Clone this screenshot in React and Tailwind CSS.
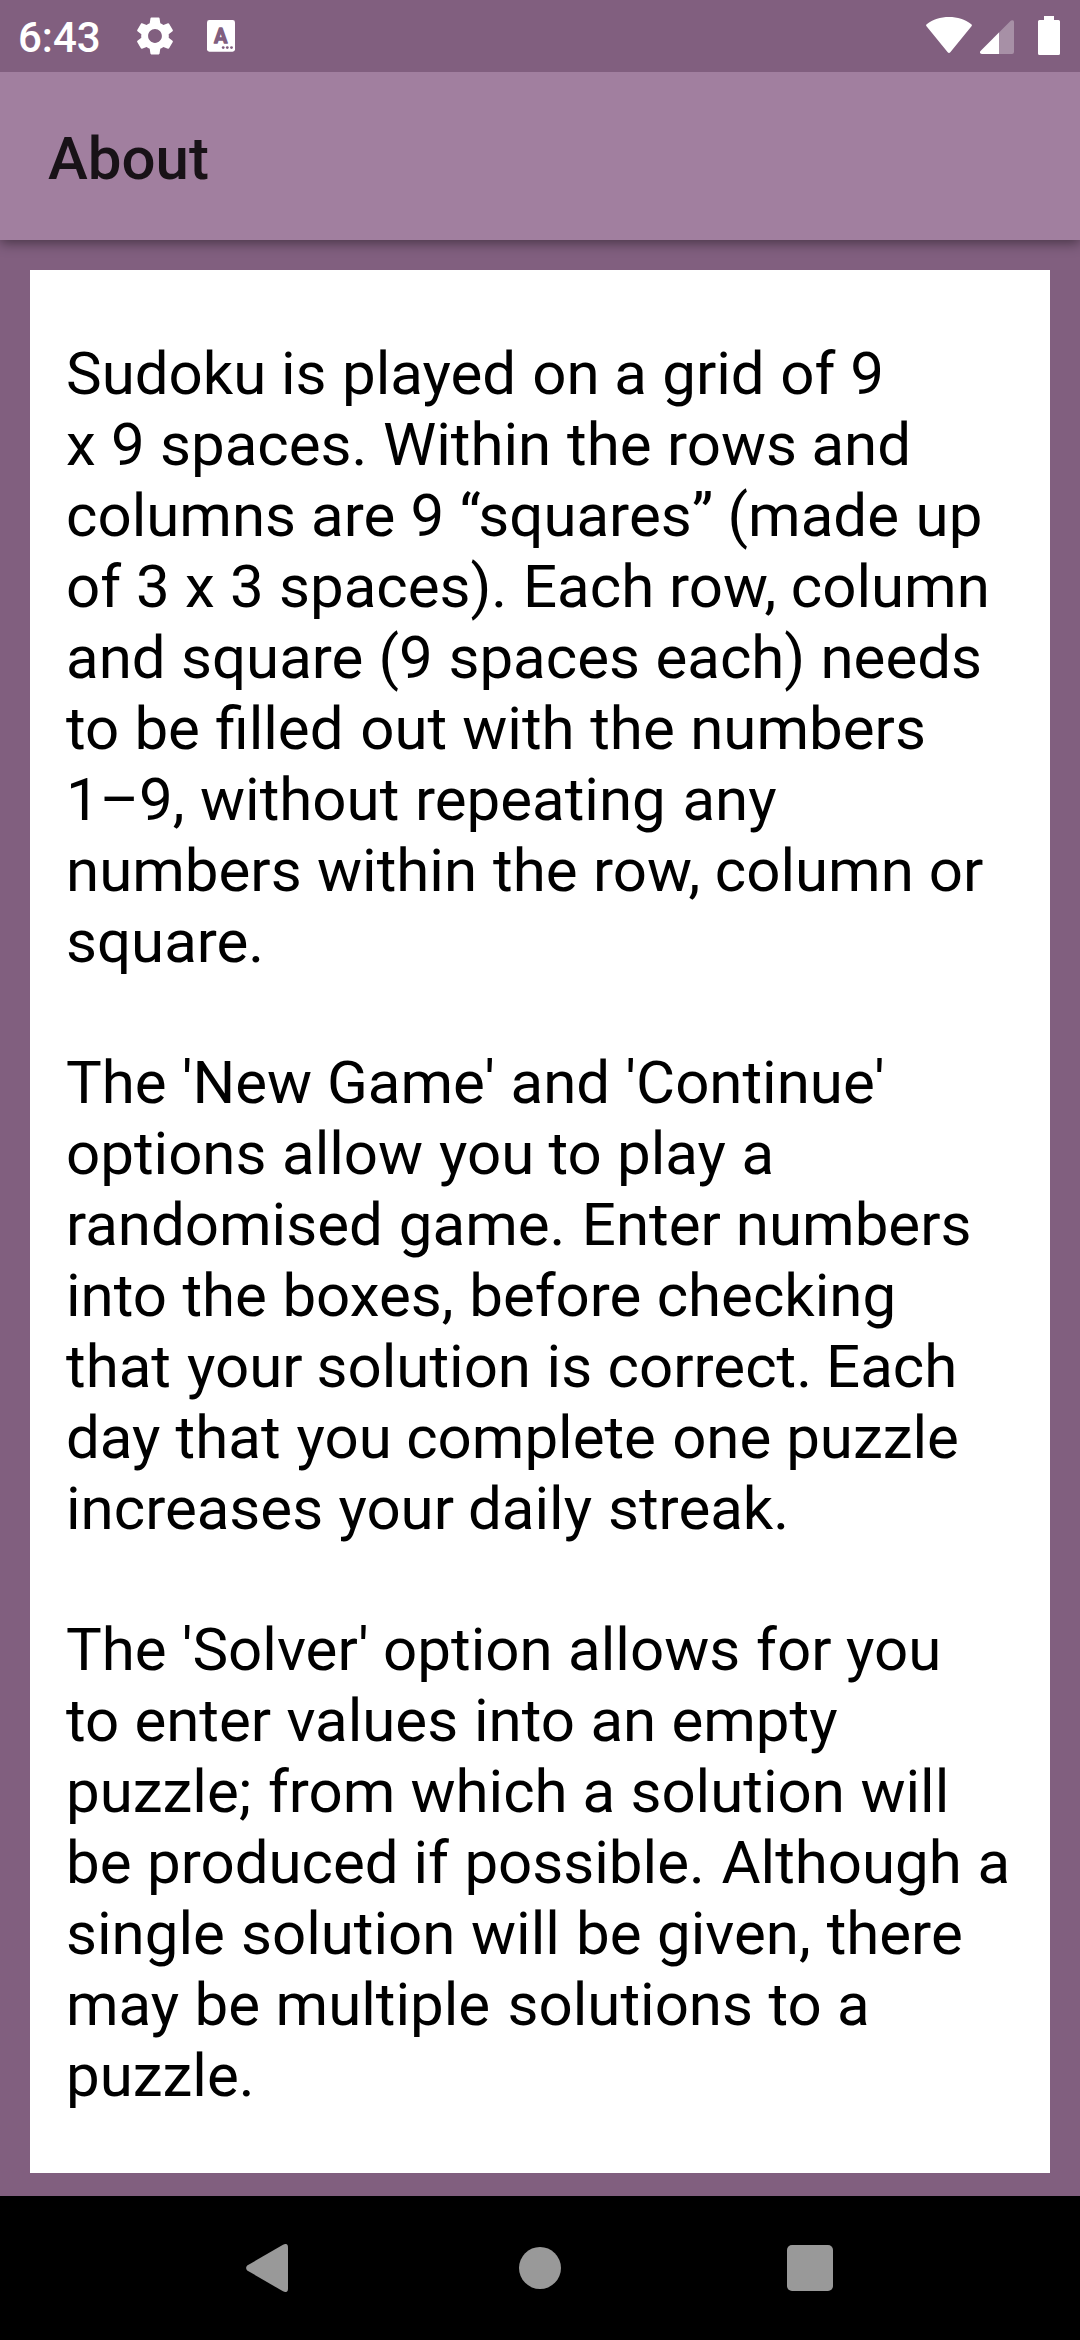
import { MdSettings } from "react-icons/md";

function StatusBar() {
  return (
    <div className="relative z-10 flex h-[72px] items-start justify-between bg-[#815f7f] text-white">
      <div className="flex items-start">
        <span className="ml-[18px] mt-[13px] w-[84px] text-[42px] leading-[50px] font-medium">6:43</span>
        <MdSettings className="mt-[13px] ml-[30px] size-[46px]" />
        <svg className="mt-5 ml-[29px] h-8 w-7" viewBox="0 0 28 32">
          <rect width="28" height="31.7" rx="2.4" fill="#fff" />
          <text
            x="13.8"
            y="22.8"
            textAnchor="middle"
            fontFamily="Roboto, sans-serif"
            fontWeight="500"
            fontSize="19.5"
            fill="#815f7f"
            stroke="#815f7f"
            strokeWidth="1.7"
            strokeLinejoin="round"
          >
            A
          </text>
          <g fill="#815f7f">
            <circle cx="16.2" cy="27.6" r="1.4" />
            <circle cx="20.3" cy="27.6" r="1.4" />
            <circle cx="24.5" cy="27.6" r="1.4" />
          </g>
        </svg>
      </div>
      <div className="mr-5 flex items-start">
        <svg className="mt-[17px] h-9 w-[46px]" viewBox="0 0 46 36" fill="#fff">
          <path d="M.5 9.2Q-.4 8.1.7 7.2C7 2.4 14.5 0 23 0S39 2.4 45.3 7.2Q46.4 8.1 45.5 9.2L24.3 35.2Q23 36.6 21.7 35.2Z" />
        </svg>
        <svg className="mt-5 ml-2 h-[34px] w-[34px]" viewBox="0 0 34 34">
          <path d="M31 .6Q34-.8 34 2V32Q34 34 32 34H2Q-1.2 33.5.6 31Z" fill="#a790a6" />
          <path d="M19 12.4V34H2Q-1.2 33.5.6 31Z" fill="#fff" />
        </svg>
        <svg className="mt-4 ml-6 h-[39px] w-[22px]" viewBox="0 0 22 39" fill="#fff">
          <path d="M6 0H16V4H20.5Q22 4 22 5.500V37.500Q22 39 20.500 39H1.500Q0 39 0 37.500V5.500Q0 4 1.500 4H6Z" />
        </svg>
      </div>
    </div>
  );
}

function AppBar() {
  return (
    <header className="relative flex h-[168px] items-center bg-[#a17f9f] pt-1.5 pl-12 shadow-[0_3px_12px_rgba(0,0,0,0.45)]">
      <h1 className="text-[60px] leading-[70px] font-medium text-[#181217]">About</h1>
    </header>
  );
}

function NavBar() {
  return (
    <nav className="flex h-[144px] items-center bg-black">
      <svg className="ml-[246px] h-12 w-[42px]" viewBox="0 0 42 48" fill="#999">
        <path d="M1.200 21.500 37 .7Q42-1.600 42 3.500V44.500Q42 49.600 37 47.300L1.200 26.500Q-1 24 1.200 21.500Z" />
      </svg>
      <div className="ml-[231px] size-[42px] rounded-full bg-[#999]" />
      <div className="ml-[226px] size-[46px] rounded-[5px] bg-[#999]" />
    </nav>
  );
}

// Glyph advances snap to whole pixels; this returns the total rounding
// difference that a word and its following space pick up.
const canvas = document.createElement("canvas").getContext("2d");
canvas.font = "60px Roboto";

function snapOffset(word) {
  return [...word, " "].reduce((sum, char) => {
    const advance = canvas.measureText(char).width;
    return sum + Math.round(advance) - advance;
  }, 0);
}

function Line({ text }) {
  const words = text.split(" ");
  return (
    <span className="block whitespace-pre">
      {words.map((word, i) => (
        <span key={i} style={{ marginRight: snapOffset(word) }}>
          {i < words.length - 1 ? word + " " : word}
        </span>
      ))}
    </span>
  );
}

const paragraphs = [
  [
    "Sudoku is played on a grid of 9",
    "x 9 spaces. Within the rows and",
    "columns are 9 “squares” (made up",
    "of 3 x 3 spaces). Each row, column",
    "and square (9 spaces each) needs",
    "to be filled out with the numbers",
    "1–9, without repeating any",
    "numbers within the row, column or",
    "square.",
  ],
  [
    "The 'New Game' and 'Continue'",
    "options allow you to play a",
    "randomised game. Enter numbers",
    "into the boxes, before checking",
    "that your solution is correct. Each",
    "day that you complete one puzzle",
    "increases your daily streak.",
  ],
  [
    "The 'Solver' option allows for you",
    "to enter values into an empty",
    "puzzle; from which a solution will",
    "be produced if possible. Although a",
    "single solution will be given, there",
    "may be multiple solutions to a",
    "puzzle.",
  ],
];

export default function App() {
  return (
    <div className="flex h-[2340px] w-[1080px] flex-col overflow-hidden bg-[#815f7f] font-['Roboto',sans-serif]">
      <StatusBar />
      <AppBar />
      <main className="flex-1 px-[30px] pt-[30px]">
        <div className="flex h-[1903px] flex-col gap-[70px] bg-white pt-[68px] pl-9 text-[60px] leading-[71px] text-black">
          {paragraphs.map((lines) => (
            <p key={lines[0]}>
              {lines.map((line) => (
                <Line key={line} text={line} />
              ))}
            </p>
          ))}
        </div>
      </main>
      <NavBar />
    </div>
  );
}
